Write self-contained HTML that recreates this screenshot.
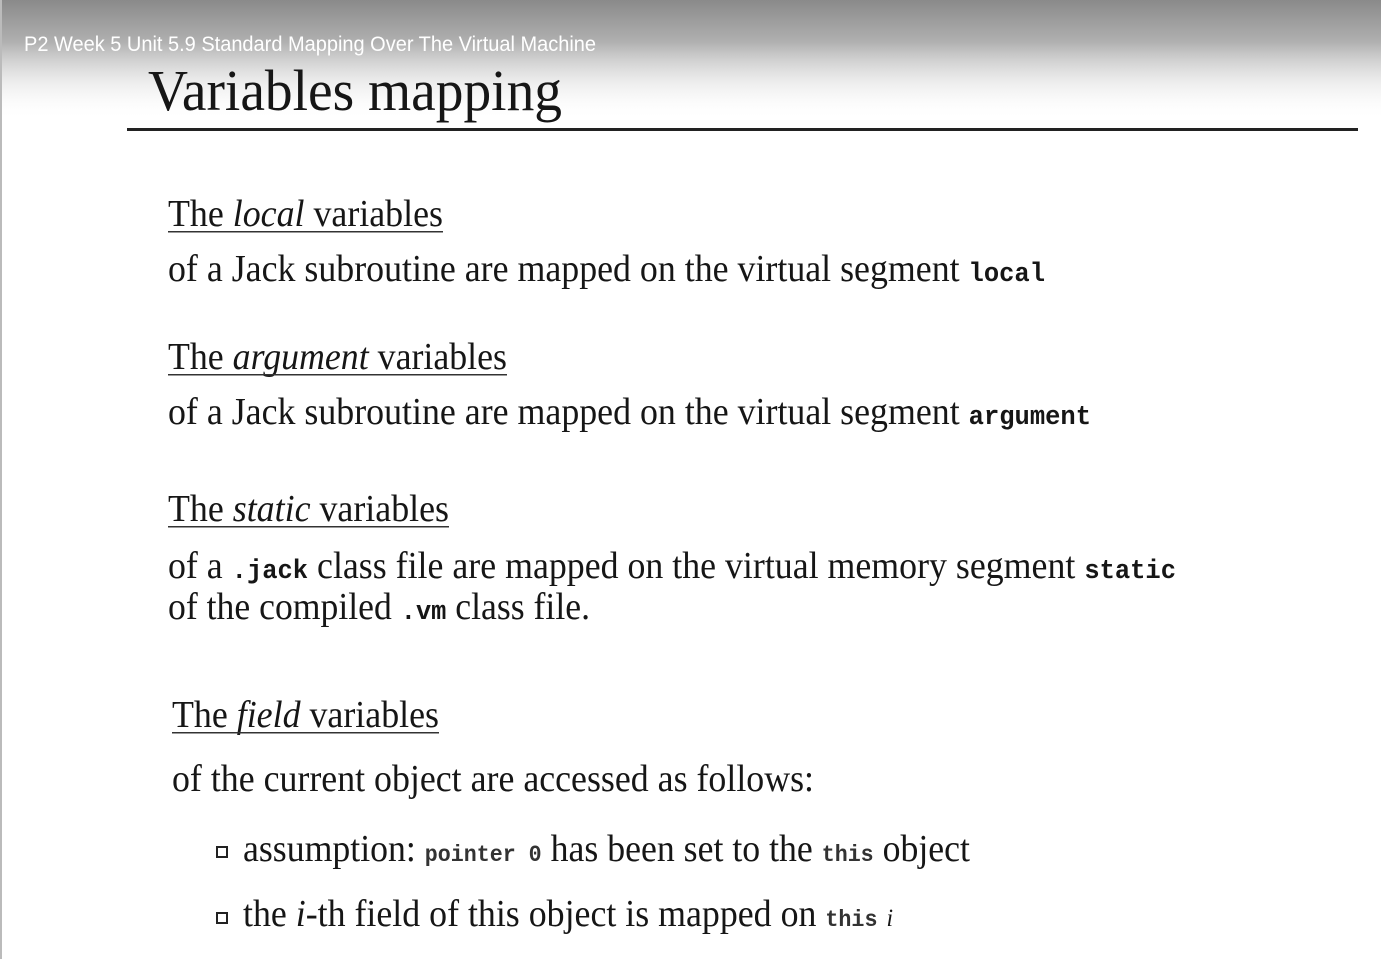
<!DOCTYPE html>
<html><head><meta charset="utf-8"><style>
html,body{margin:0;padding:0;width:1381px;height:959px;overflow:hidden;background:#fff}
svg{display:block}
.s{font-family:"Liberation Serif",serif;fill:#161616}
.m{font-family:"Liberation Mono",monospace;font-weight:bold}
</style></head><body>
<svg width="1381" height="959" xmlns="http://www.w3.org/2000/svg">
<defs><linearGradient id="g" x1="0" y1="0" x2="0" y2="1">
<stop offset="0" stop-color="#8a8a8a"/><stop offset="0.35" stop-color="#b0b0b0"/><stop offset="1" stop-color="#ffffff" stop-opacity="0"/></linearGradient></defs>
<rect x="0" y="0" width="1381" height="959" fill="#fff"/>
<rect x="0" y="0" width="1381" height="120" fill="url(#g)"/>
<rect x="0" y="0" width="2" height="959" fill="#bbb"/>
<text x="24" y="51" font-family="Liberation Sans,sans-serif" font-size="21" fill="#fff" textLength="572" lengthAdjust="spacingAndGlyphs">P2 Week 5 Unit 5.9 Standard Mapping Over The Virtual Machine</text>
<text class="s" x="148" y="110" font-size="58" textLength="414" lengthAdjust="spacingAndGlyphs">Variables mapping</text>
<rect x="127" y="128" width="1231" height="3" fill="#222"/>

<text class="s" x="168" y="226" font-size="38" textLength="275" lengthAdjust="spacingAndGlyphs">The <tspan font-style="italic">local</tspan> variables</text>
<rect x="168" y="231" width="275" height="1.5" fill="#333"/>
<text class="s" x="168" y="281" font-size="38" textLength="877" lengthAdjust="spacingAndGlyphs">of a Jack subroutine are mapped on the virtual segment <tspan class="m" font-size="27">local</tspan></text>

<text class="s" x="168" y="369" font-size="38" textLength="339" lengthAdjust="spacingAndGlyphs">The <tspan font-style="italic">argument</tspan> variables</text>
<rect x="168" y="374" width="339" height="1.5" fill="#333"/>
<text class="s" x="168" y="424" font-size="38" textLength="923" lengthAdjust="spacingAndGlyphs">of a Jack subroutine are mapped on the virtual segment <tspan class="m" font-size="27">argument</tspan></text>

<text class="s" x="168" y="521" font-size="38" textLength="281" lengthAdjust="spacingAndGlyphs">The <tspan font-style="italic">static</tspan> variables</text>
<rect x="168" y="526" width="281" height="1.5" fill="#333"/>
<text class="s" x="168" y="578" font-size="38" textLength="1008" lengthAdjust="spacingAndGlyphs">of a <tspan class="m" font-size="27">.jack</tspan> class file are mapped on the virtual memory segment <tspan class="m" font-size="27">static</tspan></text>
<text class="s" x="168" y="619" font-size="38" textLength="422" lengthAdjust="spacingAndGlyphs">of the compiled <tspan class="m" font-size="27">.vm</tspan> class file.</text>

<text class="s" x="172" y="727" font-size="38" textLength="267" lengthAdjust="spacingAndGlyphs">The <tspan font-style="italic">field</tspan> variables</text>
<rect x="172" y="732" width="267" height="1.5" fill="#333"/>
<text class="s" x="172" y="791" font-size="38" textLength="642" lengthAdjust="spacingAndGlyphs">of the current object are accessed as follows:</text>

<rect x="217" y="847" width="10" height="10" fill="none" stroke="#222" stroke-width="2"/>
<text class="s" x="243" y="861" font-size="38" textLength="727" lengthAdjust="spacingAndGlyphs">assumption: <tspan class="m" font-size="23" fill="#333">pointer 0</tspan> has been set to the <tspan class="m" font-size="23" fill="#333">this</tspan> object</text>
<rect x="217" y="913" width="10" height="10" fill="none" stroke="#222" stroke-width="2"/>
<text class="s" x="243" y="926" font-size="38" textLength="650" lengthAdjust="spacingAndGlyphs">the <tspan font-style="italic">i</tspan>-th field of this object is mapped on <tspan class="m" font-size="23" fill="#333">this</tspan> <tspan font-style="italic" font-size="25">i</tspan></text>
</svg>
</body></html>
